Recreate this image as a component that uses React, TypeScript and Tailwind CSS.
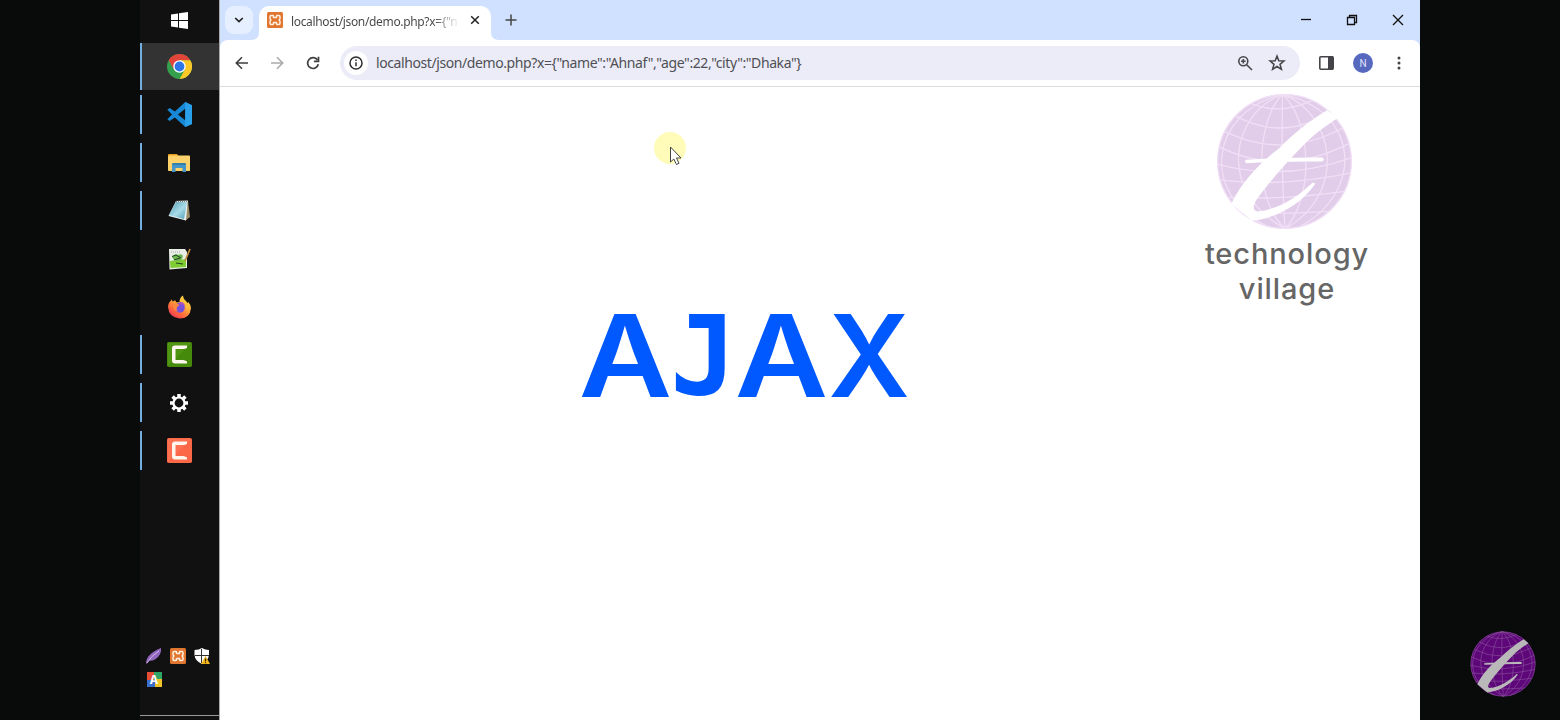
import React from "react";

function Globe({ className, fill, line, stroke, lineWidth }: { className: string; fill: string; line: string; stroke: string; lineWidth: number }) {
  return (
    <svg viewBox="80 24 412 412" className={className}>
      <circle cx="286" cy="230" r="202" fill={fill} />
      <g fill="none" stroke={line} strokeWidth={lineWidth}>
        <circle cx="286" cy="230" r="201" />
        <path d="M280 28C278 150 278 300 288 432" />
        <path d="M280 28C205 100 185 340 288 432M280 28C370 110 375 340 288 432" />
        <path d="M280 28C125 85 80 320 288 432M280 28C440 85 475 330 288 432" />
        <path d="M280 28C60 80 30 330 235 425M280 28C510 75 530 320 330 427" />
        <path d="M186 55Q270 92 370 46M138 92Q280 172 425 80M108 140Q280 225 460 130M88 185Q280 280 482 175M84 238Q280 292 489 218M93 286Q280 308 486 264M118 338Q290 346 466 320M162 386Q290 388 420 380" />
      </g>
      <path fill={stroke} d="M415 75C360 108 310 148 270 190C220 228 160 285 126 357L188 408C255 402 335 362 379 296L371 293C325 338 265 375 205 380C184 377 195 354 210 334C250 280 293 232 340 184C375 147 410 124 445 100Z" />
      <path fill={stroke} d="M170 225Q285 217 400 218Q408 223 400 230Q290 229 172 235Q164 230 170 225Z" />
    </svg>
  );
}

function Xampp({ className }: { className: string }) {
  return (
    <svg viewBox="0 0 16 16" className={className}>
      <rect width="16" height="16" rx="1.5" fill="#e0762f" />
      <g fill="none" stroke="#fff0df" strokeWidth="1.5" strokeLinejoin="round">
        <path d="M4.200 3.500H5.800Q6.500 3.500 6.500 4.200V5.500H9.500V4.200Q9.500 3.500 10.200 3.500H11.800Q13 3.500 13 4.700V6.200Q13 7.200 12 8Q13 8.800 13 9.800V11.300Q13 12.500 11.800 12.500H10.200Q9.500 12.500 9.500 11.800V10.500H6.500V11.800Q6.500 12.500 5.800 12.500H4.200Q3 12.500 3 11.300V9.800Q3 8.800 4 8Q3 7.200 3 6.200V4.700Q3 3.500 4.200 3.500Z" />
      </g>
    </svg>
  );
}

function Chrome() {
  return (
    <svg viewBox="0 0 24 24" className="size-[25px]">
      <circle cx="12" cy="12" r="12" fill="#34a04e" />
      <path d="M1.600 6A12 12 0 0 1 22.400 6H12L6.800 15Z" fill="#e2443a" />
      <path d="M22.400 6A12 12 0 0 1 12 24L17.200 15L12 6Z" fill="#fbc828" />
      <circle cx="12" cy="12" r="6" fill="#fff" />
      <circle cx="12" cy="12" r="4.700" fill="#2d75e8" />
    </svg>
  );
}

function VsCode() {
  return (
    <svg viewBox="0 0 24 24" className="size-[25px]">
      <path d="M17.500 0L24 3V21L17.500 24L7.600 14.900L2.500 18.300L.3 16.600L4.800 12L.3 7.400L2.500 5.700L7.600 9.100ZM17.500 6.500L10.500 12L17.500 17.500Z" fill="#1688d6" fillRule="evenodd" />
      <path d="M17.500 0L24 3V21L17.500 24Z" fill="#2aa0ea" />
    </svg>
  );
}

function Explorer() {
  return (
    <svg viewBox="0 0 22 18" className="h-[18px] w-[22px]">
      <path d="M0 1q0-1 1-1h8l1.500 2H0Z" fill="#e8a01c" />
      <rect y="1.500" width="22" height="15.500" rx=".8" fill="#fdd26a" />
      <path d="M4 18v-7.500q0-1.500 1.500-1.500h11q1.500 0 1.500 1.500V18h-3.500v-4h-7v4Z" fill="#4596c8" />
      <path d="M4 11q0-2 1.500-2h11q1.500 0 1.500 2Z" fill="#337fab" />
    </svg>
  );
}

function Notepad() {
  return (
    <svg viewBox="0 0 22 21" className="h-[21px] w-[22px]">
      <defs>
        <linearGradient id="pad" x1="0" y1="0" x2="1" y2="1">
          <stop offset="0" stopColor="#4e9ab0" /><stop offset=".55" stopColor="#a9dbe8" /><stop offset="1" stopColor="#4a9bb5" />
        </linearGradient>
      </defs>
      <path d="M20 1L22 17L17 21Z" fill="#9b8a62" />
      <path d="M8 1L20 .5L18 20.500L.5 16Z" fill="#e4eeee" />
      <path d="M8 2L19 2L16 19L1 15Z" fill="url(#pad)" />
      <path d="M8 1.500L20 1" stroke="#777" strokeWidth="1.500" strokeDasharray="1 1" />
    </svg>
  );
}

function NotepadPlus() {
  return (
    <svg viewBox="0 0 23 22" className="h-[22px] w-[23px]">
      <path d="M1 1H17L19 4V20L1.500 21.500Z" fill="#e8eee5" />
      <path d="M2 13L18 11V19L2.500 20Z" fill="#7ecb33" />
      <path d="M4 9q3-4 6-2q4-2 5 1q-1 5-5 5t-6-4Z" fill="#6db650" />
      <path d="M4 8.500l4-1.500l5 3M6 12l6-2M8 15l7 1" stroke="#20421e" strokeWidth="1" fill="none" />
      <path d="M3 4h10" stroke="#aaa" strokeDasharray="1 1" />
      <path d="M22 1L17 13" stroke="#be8c3d" strokeWidth="1.700" />
    </svg>
  );
}

function Firefox() {
  return (
    <svg viewBox="0 0 24 24" className="h-[24px] w-[23px]">
      <defs>
        <linearGradient id="fox" x1=".9" y1="0" x2=".2" y2="1">
          <stop offset="0" stopColor="#ffe944" /><stop offset=".4" stopColor="#ffb23a" /><stop offset=".7" stopColor="#ff6a3c" /><stop offset="1" stopColor="#ef3159" />
        </linearGradient>
      </defs>
      <path d="M3.500 4L5 6.200L7.500 5L8.500 7L12 7Q12 2 15.500 0Q16 4 19 6L20.500 8L21 6.500Q24 10 24 13Q23 24 12 24Q1 23 0 12Q.5 7 3 5.500Z" fill="url(#fox)" />
      <circle cx="12.300" cy="12.700" r="5.200" fill="#7950d8" />
      <path d="M5 9Q9 7 12 10L9.500 12Q8 15 11 17Q5 16 5 9Z" fill="#ff873f" />
      <path d="M12 7Q17 6 18 12Q17 9 12 9Z" fill="#ad51c5" />
    </svg>
  );
}

function Camtasia({ green = false }: { green?: boolean }) {
  return (
    <svg viewBox="0 0 25 25" className="size-[25px]">
      <rect width="25" height="25" rx="1.800" fill={green ? "#468a0c" : "#fa6848"} />
      <path d="M1 1H24L1 24Z" fill={green ? "#5ba118" : "#fb7a5a"} opacity=".5" />
      <path d="M20 3.500V6Q18 7 16 7H8.500V18H16Q18 18 20 19.500V21.500H8Q5 21.500 5 18.500V6.500Q5 3.500 8 3.500Z" fill="#fff7ee" />
    </svg>
  );
}

function Gear() {
  return (
    <svg viewBox="0 0 20 20" className="size-[20px]" fill="none" stroke="#fff">
      <circle cx="10" cy="10" r="5.500" strokeWidth="2.200" />
      <path strokeWidth="3.500" d="M10 4V1M10 16V19M4 10H1M16 10H19M5.800 5.800L3.600 3.600M14.200 5.800L16.400 3.600M5.800 14.200L3.600 16.400M14.200 14.200L16.400 16.400" />
    </svg>
  );
}

function TaskItem({ children, open = true, active = false }: { children: React.ReactNode; open?: boolean; active?: boolean }) {
  return (
    <div className={active ? "h-12 pt-px" : "h-12 pt-[5px]"}>
      <div className={active ? "flex h-[47px] w-full items-center bg-[#333]" : "flex h-[39px] w-full items-center"}>
        <div className={open ? "h-full w-[2px] bg-[#72aee0]" : "h-full w-[2px]"} />
        <div className="flex grow justify-center pr-[3px]">{children}</div>
      </div>
    </div>
  );
}

function Taskbar() {
  return (
    <aside className="flex w-[79px] shrink-0 flex-col bg-[#111]">
      <div className="flex h-[42px] items-start justify-center pt-[12px]">
        <svg viewBox="0 0 17 17" className="size-[17px]" fill="#fff">
          <path d="M0 2.500L7 1.500V8H0ZM8 1.300L17 0V8H8ZM0 9H7V15.500L0 14.500ZM8 9H17V17L8 15.700Z" />
        </svg>
      </div>
      <TaskItem active><Chrome /></TaskItem>
      <TaskItem><VsCode /></TaskItem>
      <TaskItem><Explorer /></TaskItem>
      <TaskItem><Notepad /></TaskItem>
      <TaskItem open={false}><NotepadPlus /></TaskItem>
      <TaskItem open={false}><Firefox /></TaskItem>
      <TaskItem><Camtasia green /></TaskItem>
      <TaskItem><Gear /></TaskItem>
      <TaskItem><Camtasia /></TaskItem>
      <div className="mt-auto grid grid-cols-3 gap-y-2 pr-[5px] pl-[2px] pb-[28px]">
        <svg viewBox="0 0 16 16" className="mx-auto size-4">
          <path d="M0 15.500Q0 6 15 0Q16 7 9 11.500Q5 13.500 3 12.500L1 15.500Z" fill="#9168bd" />
          <path d="M1 15Q5 8 13 3" stroke="#d2b8e8" fill="none" />
        </svg>
        <Xampp className="mx-auto size-4" />
        <svg viewBox="0 0 16 16" className="mx-auto size-4">
          <path d="M8 0Q11 2 15 2V7Q14 13 8 16Q1 13 .5 7V2Q5 2 8 0Z" fill="#fff" />
          <path d="M7.500 1V15M1 7.500H15" stroke="#333" />
          <path d="M11.500 8L16 16H7Z" fill="#f8b91c" />
          <path d="M11.500 10.500V13.500M11.500 14.200V15.300" stroke="#332400" strokeWidth="1.200" />
        </svg>
        <div className="mx-auto flex size-[15px] items-center justify-center bg-[conic-gradient(#2ea465_25%,#efc329_25%_50%,#3b6fcd_50%_75%,#e54d34_75%)] font-['Inter'] text-[12px] leading-none font-bold text-white">A</div>
      </div>
      <div className="h-px bg-[#999]" />
      <div className="h-[4px]" />
    </aside>
  );
}

function TabStrip() {
  return (
    <header className="flex h-10 bg-[#d0e0ff]">
      <div className="mt-[6px] ml-[5px] flex h-[28px] w-[28px] items-center justify-center rounded-[9px] bg-[#e6efff]">
        <svg viewBox="0 0 10 6" className="h-[6px] w-[10px]" fill="none" stroke="#222" strokeWidth="1.700"><path d="M1.200 1L5 4.600L8.800 1" /></svg>
      </div>
      <svg viewBox="0 0 8 8" className="-ml-[2px] size-2 self-end"><path d="M8 0Q8 8 0 8H8Z" fill="#fff" /></svg>
      <div className="mt-[6px] flex h-[34px] w-[232px] items-start rounded-t-[10px] bg-white pt-[6px] pl-[8px]">
        <Xampp className="size-4 shrink-0" />
        <div className="ml-[8px] h-[18px] w-[169px] bg-[linear-gradient(90deg,#444_84%,#fff_100%)] bg-clip-text font-['Noto_Sans',sans-serif] text-[12px] leading-[19px] tracking-[-0.34px] whitespace-nowrap text-transparent">{'localhost/json/demo.php?x={"n'}</div>
        <svg viewBox="0 0 10 10" className="mt-[3px] ml-[10px] size-[10px] shrink-0" stroke="#222" strokeWidth="1.500"><path d="M1.200 1.200L8.800 8.800M8.800 1.200L1.200 8.800" /></svg>
      </div>
      <svg viewBox="0 0 8 8" className="size-2 self-end"><path d="M0 0Q0 8 8 8H0Z" fill="#fff" /></svg>
      <svg viewBox="0 0 12 12" className="mt-[14px] ml-[6px] size-3" stroke="#444" strokeWidth="1.500"><path d="M6 .5V11.500M.5 6H11.500" /></svg>
      <div className="ml-auto flex pt-[14px] pr-[16px]">
        <svg viewBox="0 0 12 12" className="size-3" stroke="#111" strokeWidth="1.300"><path d="M1 5.500H11" /></svg>
        <svg viewBox="0 0 12 12" className="ml-[34px] size-3" fill="none" stroke="#111" strokeWidth="1.300"><path d="M1.500 3.500H8.500V10.500H1.500ZM3.500 3.200V1.500H10.500V8.500H8.700" /></svg>
        <svg viewBox="0 0 12 12" className="ml-[34px] size-3" stroke="#111" strokeWidth="1.300"><path d="M1 1L11 11M11 1L1 11" /></svg>
      </div>
    </header>
  );
}

function Toolbar() {
  return (
    <div className="bg-[#d0e0ff]">
      <div className="flex h-[47px] items-center rounded-t-[8px] border-b border-[#ddd] bg-white">
        <svg viewBox="0 0 14 14" className="ml-[15px] size-[14px]" fill="none" stroke="#3e3e40" strokeWidth="1.600"><path d="M13 7H2M7 1.300L1.300 7L7 12.700" /></svg>
        <svg viewBox="0 0 14 14" className="ml-[21px] size-[14px]" fill="none" stroke="#aaa" strokeWidth="1.600"><path d="M1 7H12M7 1.300L12.700 7L7 12.700" /></svg>
        <svg viewBox="0 0 14 14" className="ml-[22px] size-[14px]" fill="none" stroke="#3e3e40" strokeWidth="1.700"><path d="M11.500 4A5.400 5.400 0 1 0 12.300 8.300" /><path d="M12.500 .7V5.300H7.900" /></svg>
        <div className="ml-[20px] flex h-[34px] w-[960px] items-center rounded-full bg-[#ebecf7] pl-[4px]">
          <div className="flex size-[24px] items-center justify-center rounded-full bg-white">
            <svg viewBox="0 0 14 14" className="size-[14px]" fill="none" stroke="#2f2f31" strokeWidth="1.500"><circle cx="7" cy="7" r="6" /><path d="M7 6.200V10.300M7 3.600V5.100" /></svg>
          </div>
          <div className="ml-[8px] font-['Noto_Sans',sans-serif] text-[14px] leading-5 tracking-[-0.41px] whitespace-nowrap text-[#505055]">{'localhost/json/demo.php?x={"name":"Ahnaf","age":22,"city":"Dhaka"}'}</div>
          <svg viewBox="0 0 16 16" className="mr-[16px] ml-auto size-[16px]" fill="none" stroke="#48484c" strokeWidth="1.600"><circle cx="6.300" cy="6.300" r="4.500" /><path d="M9.700 9.700L15 15M4 6.300H8.600M6.300 4V8.600" /></svg>
          <svg viewBox="0 0 16 16" className="mr-[15px] size-[16px] overflow-visible" fill="none" stroke="#444448" strokeWidth="1.500"><path d="M8 1L9.800 5.700L15 6L11 9.300L12.400 14.300L8 11.500L3.600 14.300L5 9.300L1 6L6.200 5.700Z" /></svg>
        </div>
        <svg viewBox="0 0 15 14" className="ml-[19px] h-[14px] w-[15px]"><rect x=".8" y=".8" width="13.400" height="12.400" rx="1" fill="none" stroke="#444448" strokeWidth="1.600" /><path d="M9 0H14V14H9Z" fill="#444448" /></svg>
        <div className="ml-[19px] flex size-[20px] items-center justify-center rounded-full bg-[#5769bf] font-['Roboto'] text-[10px] text-[#e0e3f8]">N</div>
        <svg viewBox="0 0 4 14" className="ml-[24px] h-[14px] w-[4px]" fill="#444448"><circle cx="2" cy="2" r="1.500" /><circle cx="2" cy="7" r="1.500" /><circle cx="2" cy="12" r="1.500" /></svg>
      </div>
    </div>
  );
}

export default function App() {
  return (
    <div className="flex h-[720px] w-[1560px] overflow-hidden bg-[#080b0a]">
      <div className="w-[140px] shrink-0 bg-[#080b0a]" />
      <Taskbar />
      <div className="w-px shrink-0 bg-[#aaa]" />
      <main className="flex w-[1200px] shrink-0 flex-col bg-white">
        <TabStrip />
        <Toolbar />
        <div className="relative grow">
          <div className="absolute top-[45px] left-[434px] size-[32px] rounded-full bg-[#fffbb9]" />
          <svg viewBox="0 0 14 20" className="absolute top-[59px] left-[449px] h-[20px] w-[14px]"><path d="M1.500 1V16L4.800 13L7.500 18.500L10 17.300L7.500 12H12Z" fill="#fff" stroke="#444" /></svg>
          <div className="flex justify-end pt-[6px] pr-[51px]">
            <div className="flex w-[164px] flex-col items-center">
              <Globe className="-ml-[5px] size-[137px]" fill="#e1cce9" line="#f1dff6" stroke="#fff" lineWidth={4} />
              <div className="mt-[6px] text-center font-['Inter',sans-serif] text-[29px] leading-[35px] font-medium tracking-[0.9px] text-[#666]">technology<br />village</div>
            </div>
          </div>
          <h1 className="absolute top-[228px] left-[362px] flex font-['Inter',sans-serif] text-[113.500px] leading-[82px] font-semibold text-[#0058ff]">
            <span className="flex w-[87px] scale-x-[1.13] justify-center">A</span>
            <span className="flex w-[69px] justify-center font-['DejaVu_Sans_Mono',monospace] text-[111px] font-bold">J</span>
            <span className="flex w-[87px] scale-x-[1.13] justify-center">A</span>
            <span className="flex w-[88px] justify-center">X</span>
          </h1>
        </div>
      </main>
      <div className="flex w-[140px] items-end pb-[23px] pl-[50px]">
        <Globe className="size-[66px]" fill="#5d0779" line="#8a4f9b" stroke="#b9b9b9" lineWidth={4} />
      </div>
    </div>
  );
}
